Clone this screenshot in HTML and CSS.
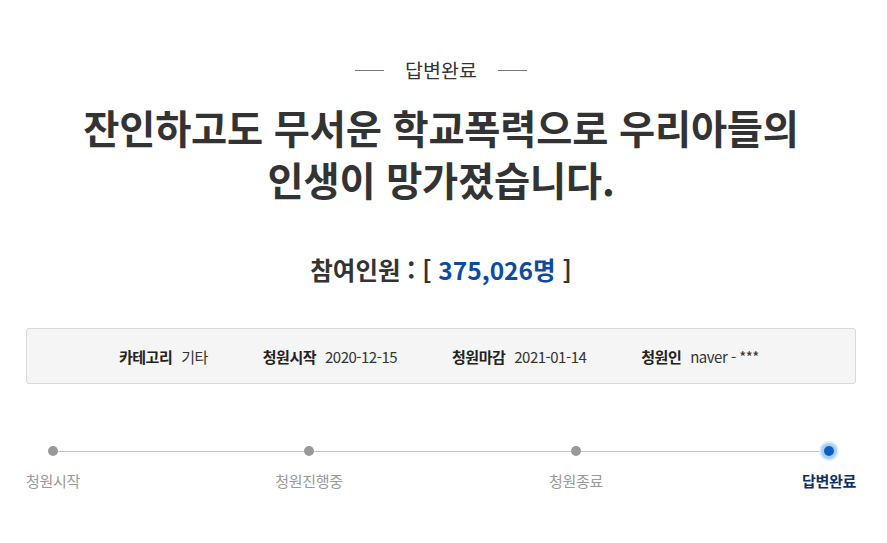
FILE: index.html
```html
<!DOCTYPE html>
<html lang="ko">
<head>
<meta charset="utf-8">
<link rel="stylesheet" href="styles.css">
</head>
<body>
<div class="page">
  <div class="status"><span class="rule"></span><span class="status-text">답변완료</span><span class="rule"></span></div>
  <h1 class="title">잔인하고도 무서운 학교폭력으로 우리아들의<br>인생이 망가졌습니다.</h1>
  <div class="count">참여인원 : [ <span class="num">375,026명</span> ]</div>
  <div class="info">
    <div class="item"><b>카테고리</b><span>기타</span></div>
    <div class="item"><b>청원시작</b><span>2020-12-15</span></div>
    <div class="item"><b>청원마감</b><span>2021-01-14</span></div>
    <div class="item"><b>청원인</b><span>naver - ***</span></div>
  </div>
  <div class="progress">
    <div class="track"></div>
    <div class="step s1"><i class="dot"></i><span>청원시작</span></div>
    <div class="step s2"><i class="dot"></i><span>청원진행중</span></div>
    <div class="step s3"><i class="dot"></i><span>청원종료</span></div>
    <div class="step s4 active"><i class="dot"></i><span>답변완료</span></div>
  </div>
</div>
</body>
</html>
```
FILE: styles.css
```css
* { box-sizing: border-box; }
html, body { margin: 0; padding: 0; background: #fff; }
body { font-family: "Noto Sans CJK KR", "Noto Sans", sans-serif; color: #333; }
.page { width: 887px; padding: 0 31px 0 26px; }
.status { display: flex; justify-content: center; align-items: center; gap: 21px; margin-top: 55px; height: 30px; }
.rule { width: 29px; height: 1px; background: #777; }
.status-text { font-size: 19.5px; color: #333; line-height: 30px; }
.title { margin: 16px 0 0; text-align: center; font-size: 39.3px; font-weight: 700; line-height: 52px; color: #333; letter-spacing: -0.2px; }
.count { margin-top: 48px; text-align: center; font-size: 24.5px; font-weight: 700; line-height: 34px; color: #333; }
.count .num { color: #0b4ba2; }
.info { margin-top: 41px; height: 56px; background: #f5f5f5; border: 1px solid #d9d9d9; border-radius: 3px; display: flex; align-items: center; padding-left: 92px; font-size: 15px; letter-spacing: -0.5px; }
.item { display: flex; gap: 9px; margin-right: 55px; color: #333; }
.item b { font-weight: 700; color: #222; }
.progress { position: relative; height: 100px; margin-top: 57px; }
.track { position: absolute; left: 27px; right: 27px; top: 10px; height: 1px; background: #c4c4c4; }
.step { position: absolute; top: 0; width: 80px; margin-left: -40px; display: flex; flex-direction: column; align-items: center; gap: 14px; }
.s1 { left: 27px; } .s2 { left: 283px; } .s3 { left: 550px; } .s4 { left: 803px; }
.dot { display: block; width: 10px; height: 10px; margin-top: 5px; border-radius: 50%; background: #999; }
.step span { font-size: 15px; color: #999; line-height: 22px; letter-spacing: -0.3px; }
.active .dot { background: #0b5fc4; box-shadow: 0 0 0 3px #a9cff6, 0 0 0 5px #dcecfc; }
.active span { color: #0b2f6e; font-weight: 700; }
```
